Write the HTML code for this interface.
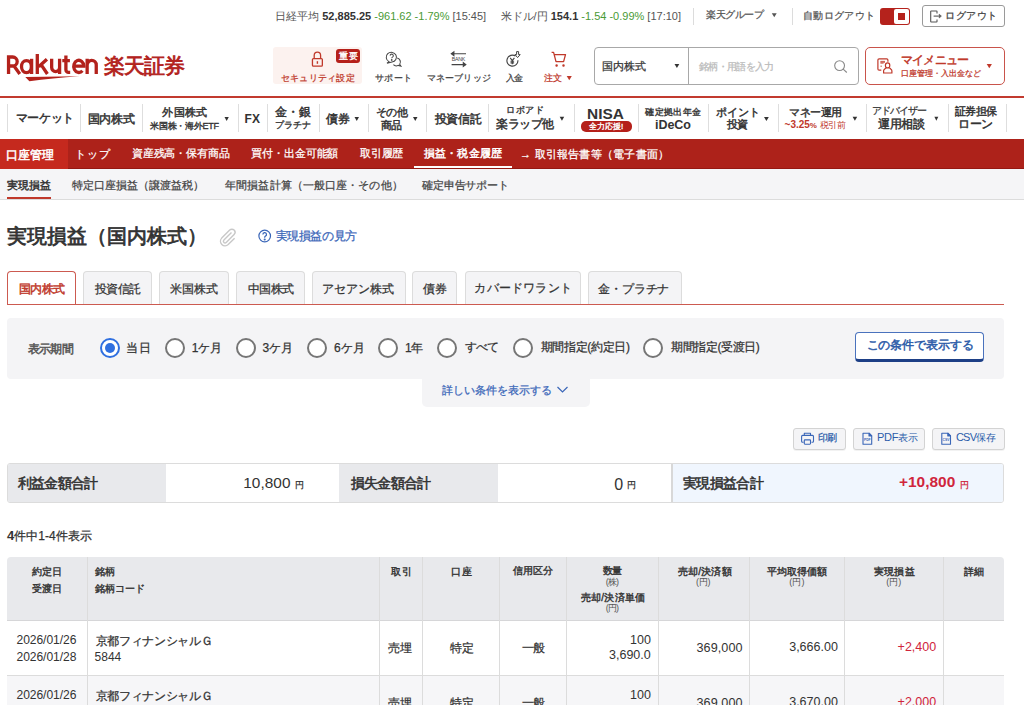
<!DOCTYPE html>
<html><head><meta charset="utf-8"><title>実現損益</title>
<style>
*{box-sizing:border-box;margin:0;padding:0}
html,body{width:1024px;height:705px;overflow:hidden;background:#fff;font-family:"Liberation Sans",sans-serif;color:#333}
.a{position:absolute;white-space:nowrap;line-height:1}
.t{position:absolute;white-space:nowrap;line-height:1;-webkit-text-stroke:0.25px currentColor}
.t b,.t[style*=bold],.nl{-webkit-text-stroke:0}
.sep{position:absolute;top:104px;width:1px;height:28px;background:#dedede}
.tab{position:absolute;top:271px;height:34px;background:#f4f4f6;border:1px solid #dcdcdc;border-bottom:none;border-radius:4px 4px 0 0}
.tab.act{background:#fff;border-color:#cc5a50}
.rad{position:absolute;top:338px;width:20px;height:20px;border:2px solid #767676;border-radius:50%;background:#fff}
.rad.on{border:2px solid #2f6fe0}
.rad.on::after{content:"";position:absolute;left:3px;top:3px;width:10px;height:10px;border-radius:50%;background:#2f6fe0}
.btn{position:absolute;top:428px;height:22px;background:#f4f4f6;border:1px solid #d3d3d3;border-radius:3px;box-shadow:0 1px 0 rgba(0,0,0,.05)}
.vl{position:absolute;top:557px;width:1px;height:148px;background:#dcdcdc}
</style></head><body>

<!-- top bar -->
<div class="a" style="left:693px;top:8px;width:1px;height:17px;background:#dcdcdc"></div>
<div class="a" style="left:792px;top:8px;width:1px;height:17px;background:#dcdcdc"></div>
<div class="a" style="left:880px;top:8px;width:30px;height:17px;background:#b5221c;border-radius:3px"></div>
<div class="a" style="left:894px;top:9px;width:15px;height:15px;background:#fff;border-radius:2px"></div>
<div class="a" style="left:898px;top:13px;width:7px;height:7px;background:#b5221c"></div>
<div class="a" style="left:922px;top:5px;width:83px;height:22px;border:1px solid #9a9a9a;border-radius:3px;background:#fff"></div>
<!-- header -->
<div class="a" style="left:273px;top:47px;width:89px;height:37px;background:#fcf2ef;border-radius:3px"></div>
<div class="a" style="left:336px;top:49px;width:24px;height:14px;background:#b5201a;border-radius:3px"></div>
<div class="a" style="left:594px;top:47px;width:265px;height:38px;border:1px solid #a8a8a8;border-radius:4px"></div>
<div class="a" style="left:688px;top:48px;width:1px;height:36px;background:#a8a8a8"></div>
<div class="a" style="left:865px;top:47px;width:140px;height:38px;border:1.5px solid #c9544b;border-radius:5px"></div>
<!-- nav -->
<div class="a" style="left:0;top:96px;width:1024px;height:2px;background:#c23a2f"></div>
<div class="sep" style="left:7px"></div><div class="sep" style="left:80px"></div><div class="sep" style="left:142px"></div><div class="sep" style="left:238px"></div><div class="sep" style="left:267px"></div><div class="sep" style="left:319px"></div><div class="sep" style="left:368px"></div><div class="sep" style="left:426px"></div><div class="sep" style="left:488px"></div><div class="sep" style="left:574px"></div><div class="sep" style="left:638px"></div><div class="sep" style="left:708px"></div><div class="sep" style="left:778px"></div><div class="sep" style="left:866px"></div><div class="sep" style="left:948px"></div><div class="sep" style="left:1006px"></div>
<div class="a" style="left:581px;top:121px;width:51px;height:10.5px;background:#b5201a;border-radius:5px"></div>
<!-- red bar -->
<div class="a" style="left:0;top:139px;width:1024px;height:30px;background:#ad221a;border-bottom:1px solid #951812"></div>
<div class="a" style="left:0;top:139px;width:68px;height:30px;background:#c5291e"></div>
<div class="a" style="left:414px;top:166px;width:98px;height:2px;background:#fff"></div>
<!-- sub nav -->
<div class="a" style="left:0;top:169px;width:1024px;height:31px;background:#f5f5f7;border-bottom:1px solid #dcdcdc"></div>
<div class="a" style="left:7px;top:197px;width:44px;height:2px;background:#c0392b"></div>
<!-- tabs -->
<div class="tab act" style="left:7px;width:69px"></div>
<div class="tab" style="left:83px;width:69px"></div>
<div class="tab" style="left:159px;width:70px"></div>
<div class="tab" style="left:236px;width:69px"></div>
<div class="tab" style="left:312px;width:94px"></div>
<div class="tab" style="left:412px;width:45px"></div>
<div class="tab" style="left:465px;width:116px"></div>
<div class="tab" style="left:588px;width:94px"></div>
<div class="a" style="left:7px;top:304px;width:997px;height:1px;background:#cc5a50"></div>
<!-- filter -->
<div class="a" style="left:7px;top:318px;width:997px;height:61px;background:#f4f4f6;border-radius:4px"></div>
<div class="rad on" style="left:100px"></div>
<div class="rad" style="left:165px"></div>
<div class="rad" style="left:236px"></div>
<div class="rad" style="left:307px"></div>
<div class="rad" style="left:378px"></div>
<div class="rad" style="left:437px"></div>
<div class="rad" style="left:513px"></div>
<div class="rad" style="left:643px"></div>
<div class="a" style="left:855px;top:332px;width:129px;height:30px;background:#fff;border:1px solid #4a72bd;border-bottom:3px solid #1d3f86;border-radius:4px"></div>
<div class="a" style="left:422px;top:378px;width:168px;height:29px;background:#f4f4f6;border-radius:0 0 5px 5px"></div>
<!-- buttons -->
<div class="btn" style="left:793px;width:53px"></div>
<div class="btn" style="left:853px;width:72px"></div>
<div class="btn" style="left:932px;width:73px"></div>
<!-- summary -->
<div class="a" style="left:7px;top:463px;width:997px;height:40px;border:1px solid #dcdcdc;border-radius:3px;overflow:hidden;background:#fff">
 <div class="a" style="left:0;top:0;width:158px;height:38px;background:#e8e9ec"></div>
 <div class="a" style="left:331px;top:0;width:159px;height:38px;background:#e8e9ec"></div>
 <div class="a" style="left:663px;top:0;width:334px;height:38px;background:#f0f6fe;border-left:2px solid #d8d8d8"></div>
</div>
<!-- table -->
<div class="a" style="left:7px;top:557px;width:997px;height:64px;background:#e8e9ec;border-radius:4px 4px 0 0;border-bottom:1px solid #d6d6d8"></div>
<div class="a" style="left:7px;top:621px;width:997px;height:55px;background:#fff;border-bottom:1px solid #dcdcdc"></div>
<div class="a" style="left:7px;top:676px;width:997px;height:40px;background:#f6f6f8"></div>
<div class="vl" style="left:87px"></div><div class="vl" style="left:379px"></div><div class="vl" style="left:422px"></div><div class="vl" style="left:499px"></div><div class="vl" style="left:566px"></div><div class="vl" style="left:658px"></div><div class="vl" style="left:749px"></div><div class="vl" style="left:844px"></div><div class="vl" style="left:943px"></div>

<div class="t nl" id="t_nk" style="left:275.20px;top:10.50px;font-size:11.00px;color:#555">日経平均 <b style="color:#333">52,885.25</b> <span style="color:#4a9a35">-961.62 -1.79%</span> [15:45]</div>
<div class="t nl" id="t_usd" style="left:500.60px;top:10.50px;font-size:11.00px;color:#555">米ドル/円 <b style="color:#333">154.1</b> <span style="color:#4a9a35">-1.54 -0.99%</span> [17:10]</div>
<div class="t" id="t_grp" style="left:705.90px;top:10.25px;font-size:10.00px;letter-spacing:-0.360px;color:#555">楽天グループ</div>
<div class="t" id="t_auto" style="left:803.20px;top:10.50px;font-size:10.00px;letter-spacing:0.300px;color:#555">自動ログアウト</div>
<div class="t" id="t_logout" style="left:945.40px;top:10.50px;font-size:10.00px;letter-spacing:0.400px;color:#444">ログアウト</div>
<div class="t" id="t_logo" style="left:103.50px;top:55.10px;font-size:21.00px;letter-spacing:-0.934px;color:#b3221c;font-weight:normal;-webkit-text-stroke:0.84px currentColor">楽天証券</div>
<div class="t" id="h_sec" style="left:280.80px;top:73.50px;font-size:9.00px;letter-spacing:0.257px;color:#c0392b">セキュリティ設定</div>
<div class="t" id="h_badge" style="left:338.50px;top:51.90px;font-size:9.00px;letter-spacing:1.000px;color:#fff;font-weight:normal;-webkit-text-stroke:0.36px currentColor">重要</div>
<div class="t" id="h_sup" style="left:375.00px;top:73.50px;font-size:9.00px;letter-spacing:0.333px;color:#444">サポート</div>
<div class="t" id="h_mb" style="left:426.80px;top:73.50px;font-size:9.00px;letter-spacing:0.167px;color:#444">マネーブリッジ</div>
<div class="t" id="h_nk" style="left:505.50px;top:73.50px;font-size:9.00px;letter-spacing:-1.000px;color:#444">入金</div>
<div class="t" id="h_ord" style="left:544.10px;top:74.00px;font-size:9.00px;letter-spacing:-0.400px;color:#c0392b">注文</div>
<div class="t" id="s_cat" style="left:602.40px;top:60.50px;font-size:11.00px;letter-spacing:-0.200px;color:#333">国内株式</div>
<div class="t" id="s_ph" style="left:699.00px;top:61.50px;font-size:10.00px;letter-spacing:-0.657px;color:#bbb">銘柄・用語を入力</div>
<div class="t" id="m_t" style="left:901.00px;top:53.50px;font-size:12.00px;letter-spacing:-0.800px;color:#c0392b;font-weight:normal;-webkit-text-stroke:0.48px currentColor">マイメニュー</div>
<div class="t" id="m_s" style="left:901.00px;top:70.30px;font-size:8.00px;color:#c0392b">口座管理・入出金など</div>
<div class="t" id="n1" style="left:15.60px;top:112.30px;font-size:12.00px;letter-spacing:-0.350px;color:#333;font-weight:normal;-webkit-text-stroke:0.48px currentColor">マーケット</div>
<div class="t" id="n2" style="left:87.70px;top:112.80px;font-size:12.00px;letter-spacing:-0.266px;color:#333;font-weight:normal;-webkit-text-stroke:0.48px currentColor">国内株式</div>
<div class="t" id="n3a" style="left:162.10px;top:107.00px;font-size:11.00px;letter-spacing:0.467px;color:#333;font-weight:normal;-webkit-text-stroke:0.44px currentColor">外国株式</div>
<div class="t" id="n3b" style="left:150.00px;top:122.00px;font-size:9.00px;letter-spacing:-0.250px;color:#333;font-weight:normal;-webkit-text-stroke:0.36px currentColor">米国株・海外ETF</div>
<div class="t nl" id="n4" style="left:244.60px;top:113.20px;font-size:12.00px;color:#333;font-weight:bold">FX</div>
<div class="t" id="n5a" style="left:275.20px;top:106.30px;font-size:12.00px;letter-spacing:-0.300px;color:#333;font-weight:normal;-webkit-text-stroke:0.48px currentColor">金・銀</div>
<div class="t" id="n5b" style="left:275.20px;top:120.90px;font-size:9.00px;letter-spacing:-0.134px;color:#333;font-weight:normal;-webkit-text-stroke:0.36px currentColor">プラチナ</div>
<div class="t" id="n6" style="left:326.30px;top:113.00px;font-size:12.00px;color:#333;font-weight:normal;-webkit-text-stroke:0.48px currentColor">債券</div>
<div class="t" id="n7a" style="left:375.80px;top:106.50px;font-size:11.00px;letter-spacing:-0.300px;color:#333;font-weight:normal;-webkit-text-stroke:0.44px currentColor">その他</div>
<div class="t" id="n7b" style="left:380.70px;top:120.10px;font-size:11.00px;letter-spacing:-0.200px;color:#333;font-weight:normal;-webkit-text-stroke:0.44px currentColor">商品</div>
<div class="t" id="n8" style="left:434.60px;top:113.00px;font-size:12.00px;letter-spacing:-0.200px;color:#333;font-weight:normal;-webkit-text-stroke:0.48px currentColor">投資信託</div>
<div class="t" id="n9a" style="left:506.40px;top:106.30px;font-size:9.00px;letter-spacing:0.400px;color:#333;font-weight:normal;-webkit-text-stroke:0.36px currentColor">ロボアド</div>
<div class="t" id="n9b" style="left:496.00px;top:118.20px;font-size:12.00px;letter-spacing:-0.450px;color:#333;font-weight:normal;-webkit-text-stroke:0.48px currentColor">楽ラップ他</div>
<div class="t nl" id="n10a" style="left:587.00px;top:105.80px;font-size:15.43px;color:#333;font-weight:bold">NISA</div>
<div class="t" id="n10b" style="left:589.00px;top:122.50px;font-size:8.00px;color:#fff;font-weight:normal;-webkit-text-stroke:0.32px currentColor">全力応援!</div>
<div class="t" id="n11a" style="left:645.20px;top:107.60px;font-size:9.00px;letter-spacing:0.360px;color:#333;font-weight:normal;-webkit-text-stroke:0.36px currentColor">確定拠出年金</div>
<div class="t nl" id="n11b" style="left:655.10px;top:119.05px;font-size:12.50px;letter-spacing:-0.100px;color:#333;font-weight:bold">iDeCo</div>
<div class="t" id="n12a" style="left:715.80px;top:106.50px;font-size:11.00px;color:#333;font-weight:normal;-webkit-text-stroke:0.44px currentColor">ポイント</div>
<div class="t" id="n12b" style="left:726.70px;top:119.05px;font-size:11.00px;letter-spacing:-0.200px;color:#333;font-weight:normal;-webkit-text-stroke:0.44px currentColor">投資</div>
<div class="t" id="n13a" style="left:789.00px;top:106.70px;font-size:11.00px;letter-spacing:-0.400px;color:#333;font-weight:normal;-webkit-text-stroke:0.44px currentColor">マネー運用</div>
<div class="t nl" id="n13b" style="left:784.60px;top:120.20px;font-size:10.00px;letter-spacing:-0.044px;color:#c0392b;font-weight:bold">~3.25<span style="font-size:8px">%</span> <span style="font-size:9px;font-weight:normal">税引前</span></div>
<div class="t" id="n14a" style="left:871.90px;top:105.90px;font-size:10.00px;letter-spacing:-0.920px;color:#333">アドバイザー</div>
<div class="t" id="n14b" style="left:878.10px;top:118.00px;font-size:12.00px;letter-spacing:-0.333px;color:#333;font-weight:normal;-webkit-text-stroke:0.48px currentColor">運用相談</div>
<div class="t" id="n15a" style="left:954.90px;top:105.90px;font-size:11.00px;letter-spacing:-0.533px;color:#333;font-weight:normal;-webkit-text-stroke:0.44px currentColor">証券担保</div>
<div class="t" id="n15b" style="left:958.40px;top:117.50px;font-size:12.00px;letter-spacing:-0.800px;color:#333;font-weight:normal;-webkit-text-stroke:0.48px currentColor">ローン</div>
<div class="t" id="r1" style="left:6.30px;top:148.80px;font-size:12.00px;color:#fff;font-weight:normal;-webkit-text-stroke:0.48px currentColor">口座管理</div>
<div class="t" id="r2" style="left:75.10px;top:148.80px;font-size:11.00px;letter-spacing:0.800px;color:#fff">トップ</div>
<div class="t" id="r3" style="left:132.00px;top:148.40px;font-size:11.00px;letter-spacing:-0.175px;color:#fff">資産残高・保有商品</div>
<div class="t" id="r4" style="left:251.20px;top:148.20px;font-size:11.00px;letter-spacing:-0.114px;color:#fff">買付・出金可能額</div>
<div class="t" id="r5" style="left:360.20px;top:148.20px;font-size:11.00px;letter-spacing:-0.266px;color:#fff">取引履歴</div>
<div class="t" id="r6" style="left:424.00px;top:148.20px;font-size:11.00px;letter-spacing:0.166px;color:#fff;font-weight:normal;-webkit-text-stroke:0.44px currentColor">損益・税金履歴</div>
<div class="t" id="r7" style="left:520.00px;top:148.70px;font-size:11.00px;letter-spacing:0.231px;color:#fff">→ 取引報告書等（電子書面）</div>
<div class="t" id="sn1" style="left:7.30px;top:179.50px;font-size:11.00px;letter-spacing:-0.200px;color:#333;font-weight:normal;-webkit-text-stroke:0.44px currentColor">実現損益</div>
<div class="t" id="sn2" style="left:71.70px;top:179.50px;font-size:11.00px;letter-spacing:0.037px;color:#444">特定口座損益（譲渡益税）</div>
<div class="t" id="sn3" style="left:225.10px;top:179.50px;font-size:11.00px;letter-spacing:0.107px;color:#444">年間損益計算（一般口座・その他）</div>
<div class="t" id="sn4" style="left:422.00px;top:179.50px;font-size:11.00px;letter-spacing:-0.143px;color:#444">確定申告サポート</div>
<div class="t" id="ti" style="left:7.40px;top:226.10px;font-size:20.00px;color:#333;font-weight:normal;-webkit-text-stroke:0.80px currentColor">実現損益（国内株式）</div>
<div class="t" id="ti_l" style="left:275.50px;top:229.50px;font-size:12.00px;letter-spacing:-0.366px;color:#3a66b8">実現損益の見方</div>
<div class="t" id="tb1" style="left:18.60px;top:282.60px;font-size:12.00px;letter-spacing:-0.400px;color:#c0392b;font-weight:normal;-webkit-text-stroke:0.48px currentColor">国内株式</div>
<div class="t" id="tb2" style="left:94.50px;top:282.60px;font-size:12.00px;letter-spacing:-0.400px;color:#333">投資信託</div>
<div class="t" id="tb3" style="left:170.30px;top:282.60px;font-size:12.00px;letter-spacing:-0.066px;color:#333">米国株式</div>
<div class="t" id="tb4" style="left:247.80px;top:282.60px;font-size:12.00px;letter-spacing:-0.533px;color:#333">中国株式</div>
<div class="t" id="tb5" style="left:322.20px;top:282.60px;font-size:12.00px;letter-spacing:0.040px;color:#333">アセアン株式</div>
<div class="t" id="tb6" style="left:423.00px;top:282.60px;font-size:12.00px;color:#333">債券</div>
<div class="t" id="tb7" style="left:474.40px;top:282.10px;font-size:12.00px;letter-spacing:0.200px;color:#333">カバードワラント</div>
<div class="t" id="tb8" style="left:598.40px;top:282.60px;font-size:12.00px;letter-spacing:-0.200px;color:#333">金・プラチナ</div>
<div class="t" id="f_l" style="left:27.50px;top:343.00px;font-size:12.00px;letter-spacing:-0.533px;color:#555;font-weight:normal;-webkit-text-stroke:0.48px currentColor">表示期間</div>
<div class="t" id="f1" style="left:126.20px;top:341.90px;font-size:12.00px;letter-spacing:1.200px;color:#333">当日</div>
<div class="t" id="f2" style="left:191.70px;top:341.90px;font-size:12.00px;color:#333">1ケ月</div>
<div class="t" id="f3" style="left:262.40px;top:341.90px;font-size:12.00px;color:#333">3ケ月</div>
<div class="t" id="f4" style="left:334.00px;top:341.90px;font-size:12.00px;letter-spacing:0.200px;color:#333">6ケ月</div>
<div class="t" id="f5" style="left:405.00px;top:341.90px;font-size:12.00px;letter-spacing:-0.600px;color:#333">1年</div>
<div class="t" id="f6" style="left:465.00px;top:341.40px;font-size:12.00px;letter-spacing:-1.000px;color:#333">すべて</div>
<div class="t" id="f7" style="left:540.50px;top:341.40px;font-size:12.00px;letter-spacing:-0.324px;color:#333">期間指定(約定日)</div>
<div class="t" id="f8" style="left:671.00px;top:341.40px;font-size:12.00px;letter-spacing:-0.400px;color:#333">期間指定(受渡日)</div>
<div class="t" id="f_btn" style="left:866.60px;top:338.90px;font-size:12.00px;letter-spacing:-0.101px;color:#2b5aa8;font-weight:normal;-webkit-text-stroke:0.48px currentColor">この条件で表示する</div>
<div class="t" id="f_more" style="left:442.20px;top:384.60px;font-size:11.00px;letter-spacing:-0.023px;color:#3a66b8">詳しい条件を表示する</div>
<div class="t" id="b1" style="left:818.00px;top:432.90px;font-size:10.00px;letter-spacing:-0.600px;color:#2b5caa">印刷</div>
<div class="t nl" id="b2" style="left:877.10px;top:432.40px;font-size:10.00px;letter-spacing:-0.350px;color:#2b5caa"><span style="font-size:11px">PDF</span>表示</div>
<div class="t nl" id="b3" style="left:955.90px;top:432.40px;font-size:10.00px;letter-spacing:-0.750px;color:#2b5caa"><span style="font-size:11px">CSV</span>保存</div>
<div class="t" id="sm1" style="left:17.90px;top:475.50px;font-size:14.00px;letter-spacing:-0.720px;color:#333;font-weight:normal;-webkit-text-stroke:0.56px currentColor">利益金額合計</div>
<div class="t nl" id="sm1v" style="left:243.20px;top:474.90px;font-size:15.40px;letter-spacing:0.040px;color:#333">10,800</div>
<div class="t" id="sm1y" style="left:295.10px;top:481.00px;font-size:9.00px;color:#333">円</div>
<div class="t" id="sm2" style="left:350.60px;top:475.50px;font-size:14.00px;letter-spacing:-0.680px;color:#333;font-weight:normal;-webkit-text-stroke:0.56px currentColor">損失金額合計</div>
<div class="t nl" id="sm2v" style="left:614.20px;top:476.90px;font-size:16.00px;color:#333">0</div>
<div class="t" id="sm2y" style="left:626.50px;top:481.00px;font-size:9.00px;color:#333">円</div>
<div class="t" id="sm3" style="left:682.80px;top:475.50px;font-size:14.00px;letter-spacing:-0.640px;color:#333;font-weight:normal;-webkit-text-stroke:0.56px currentColor">実現損益合計</div>
<div class="t nl" id="sm3v" style="left:899.00px;top:474.40px;font-size:15.45px;color:#d0253c;font-weight:bold">+10,800</div>
<div class="t" id="sm3y" style="left:959.60px;top:481.00px;font-size:9.00px;color:#d0253c">円</div>
<div class="t" id="cnt" style="left:7.00px;top:528.60px;font-size:12.00px;color:#333"><b style="font-size:13px">4</b>件中1-4件表示</div>
<div class="t" id="h1a" style="left:31.70px;top:566.60px;font-size:10.00px;letter-spacing:0.100px;color:#333;font-weight:normal;-webkit-text-stroke:0.40px currentColor">約定日</div>
<div class="t" id="h1b" style="left:31.70px;top:583.60px;font-size:10.00px;letter-spacing:0.100px;color:#333;font-weight:normal;-webkit-text-stroke:0.40px currentColor">受渡日</div>
<div class="t" id="h2a" style="left:95.00px;top:566.60px;font-size:10.00px;letter-spacing:-0.400px;color:#333;font-weight:normal;-webkit-text-stroke:0.40px currentColor">銘柄</div>
<div class="t" id="h2b" style="left:95.00px;top:583.60px;font-size:10.00px;color:#333;font-weight:normal;-webkit-text-stroke:0.40px currentColor">銘柄コード</div>
<div class="t" id="h3" style="left:391.00px;top:566.60px;font-size:10.00px;letter-spacing:1.000px;color:#333;font-weight:normal;-webkit-text-stroke:0.40px currentColor">取引</div>
<div class="t" id="h4" style="left:450.80px;top:566.60px;font-size:10.00px;letter-spacing:0.800px;color:#333;font-weight:normal;-webkit-text-stroke:0.40px currentColor">口座</div>
<div class="t" id="h5" style="left:513.40px;top:566.10px;font-size:10.00px;letter-spacing:-0.200px;color:#333;font-weight:normal;-webkit-text-stroke:0.40px currentColor">信用区分</div>
<div class="t" id="h6a" style="left:603.00px;top:566.10px;font-size:10.00px;letter-spacing:-1.000px;color:#333;font-weight:normal;-webkit-text-stroke:0.40px currentColor">数量</div>
<div class="t nl" id="h6b" style="left:605.70px;top:577.70px;font-size:9.00px;letter-spacing:-0.800px;color:#555">(株)</div>
<div class="t" id="h6c" style="left:580.50px;top:592.80px;font-size:10.00px;letter-spacing:0.333px;color:#333;font-weight:normal;-webkit-text-stroke:0.40px currentColor">売却/決済単価</div>
<div class="t nl" id="h6d" style="left:605.70px;top:603.90px;font-size:9.00px;letter-spacing:-0.800px;color:#555">(円)</div>
<div class="t" id="h7a" style="left:677.60px;top:566.60px;font-size:10.00px;letter-spacing:0.280px;color:#333;font-weight:normal;-webkit-text-stroke:0.40px currentColor">売却/決済額</div>
<div class="t nl" id="h7b" style="left:696.10px;top:577.70px;font-size:9.00px;letter-spacing:-0.300px;color:#555">(円)</div>
<div class="t" id="h8a" style="left:766.90px;top:566.60px;font-size:10.00px;letter-spacing:0.080px;color:#333;font-weight:normal;-webkit-text-stroke:0.40px currentColor">平均取得価額</div>
<div class="t nl" id="h8b" style="left:789.20px;top:578.30px;font-size:9.00px;letter-spacing:0.200px;color:#555">(円)</div>
<div class="t" id="h9a" style="left:874.20px;top:566.60px;font-size:10.00px;letter-spacing:0.134px;color:#333;font-weight:normal;-webkit-text-stroke:0.40px currentColor">実現損益</div>
<div class="t nl" id="h9b" style="left:886.30px;top:578.30px;font-size:9.00px;color:#555">(円)</div>
<div class="t" id="h10" style="left:964.00px;top:566.60px;font-size:10.00px;letter-spacing:0.200px;color:#333;font-weight:normal;-webkit-text-stroke:0.40px currentColor">詳細</div>
<div class="t nl" id="d0dt1" style="left:16.50px;top:633.60px;font-size:12.08px;letter-spacing:-0.066px;color:#333">2026/01/26</div>
<div class="t nl" id="d0dt2" style="left:16.50px;top:651.40px;font-size:12.08px;letter-spacing:-0.066px;color:#333">2026/01/28</div>
<div class="t" id="d0nm" style="left:95.60px;top:634.60px;font-size:12.00px;letter-spacing:-0.311px;color:#333">京都フィナンシャルＧ</div>
<div class="t nl" id="d0cd" style="left:94.60px;top:650.50px;font-size:12.00px;color:#333">5844</div>
<div class="t" id="d0tr" style="left:388.40px;top:642.20px;font-size:12.00px;letter-spacing:-0.200px;color:#333">売埋</div>
<div class="t" id="d0ac" style="left:449.80px;top:642.20px;font-size:12.00px;letter-spacing:-0.200px;color:#333">特定</div>
<div class="t" id="d0cr" style="left:521.50px;top:642.20px;font-size:12.00px;letter-spacing:-1.000px;color:#333">一般</div>
<div class="t nl" id="d0q" style="left:630.00px;top:634.30px;font-size:12.50px;color:#333">100</div>
<div class="t nl" id="d0up" style="left:609.00px;top:649.40px;font-size:12.50px;color:#333">3,690.0</div>
<div class="t nl" id="d0amt" style="left:696.50px;top:641.90px;font-size:12.61px;letter-spacing:0.067px;color:#333">369,000</div>
<div class="t nl" id="d0avg" style="left:789.20px;top:641.40px;font-size:12.50px;color:#333">3,666.00</div>
<div class="t nl" id="d0pl" style="left:897.60px;top:641.40px;font-size:12.50px;color:#d0253c">+2,400</div>
<div class="t nl" id="d1dt1" style="left:16.50px;top:688.60px;font-size:12.08px;letter-spacing:-0.066px;color:#333">2026/01/26</div>
<div class="t nl" id="d1dt2" style="left:16.50px;top:706.40px;font-size:12.08px;letter-spacing:-0.066px;color:#333">2026/01/28</div>
<div class="t" id="d1nm" style="left:95.60px;top:689.60px;font-size:12.00px;letter-spacing:-0.311px;color:#333">京都フィナンシャルＧ</div>
<div class="t nl" id="d1cd" style="left:94.60px;top:705.50px;font-size:12.00px;color:#333">5844</div>
<div class="t" id="d1tr" style="left:388.40px;top:697.20px;font-size:12.00px;letter-spacing:-0.200px;color:#333">売埋</div>
<div class="t" id="d1ac" style="left:449.80px;top:697.20px;font-size:12.00px;letter-spacing:-0.200px;color:#333">特定</div>
<div class="t" id="d1cr" style="left:521.50px;top:697.20px;font-size:12.00px;letter-spacing:-1.000px;color:#333">一般</div>
<div class="t nl" id="d1q" style="left:630.00px;top:689.30px;font-size:12.50px;color:#333">100</div>
<div class="t nl" id="d1up" style="left:609.00px;top:704.40px;font-size:12.50px;color:#333">3,690.0</div>
<div class="t nl" id="d1amt" style="left:696.50px;top:696.90px;font-size:12.61px;letter-spacing:0.067px;color:#333">369,000</div>
<div class="t nl" id="d1avg" style="left:789.20px;top:696.40px;font-size:12.50px;color:#333">3,670.00</div>
<div class="t nl" id="d1pl" style="left:897.60px;top:696.40px;font-size:12.50px;color:#d0253c">+2,000</div>

<svg style="position:absolute;left:0;top:0" width="1024" height="705" viewBox="0 0 1024 705" fill="none">
<g stroke="#555" stroke-width="1.1" stroke-linejoin="round"><path d="M937 13.6v-2.1a.5.5 0 0 0-.5-.5h-5.2a.6.6 0 0 0-.6.6v9.8a.6.6 0 0 0 .6.6h5.2a.5.5 0 0 0 .5-.5v-2.1"/><path d="M933.6 16.1h5.2"/><path d="M939.2 14.2l2.2 1.9-2.2 1.9z" fill="#555" stroke-width=".6"/></g>
<g fill="none" stroke="#b3221c" stroke-width="3.3">
<path d="M8.55 74V57h4.15a4.5 4.5 0 0 1 0 9H8.55M14.2 66.3l5.6 7.7"/>
<ellipse cx="26.45" cy="66.6" rx="4.95" ry="6.05"/><path d="M31.6 58.8V74"/>
<path d="M37.3 54.1V74M46.9 59.2l-8.2 7.6M41.6 65.3l5.8 8.7"/>
<path d="M51.65 58.8v8.8a4 4 0 0 0 8 0M59.6 58.8V74"/>
<path d="M65.9 55.6v14.2a2.6 2.6 0 0 0 2.6 2.6h1.7M62.3 60.7h7.6"/>
<path d="M72.6 66.1h11.3a5.1 6.1 0 1 0-1.5 4.6"/>
<path d="M87.15 74V58.8M87.15 65a4.55 4.55 0 0 1 9.1 0V74"/>
<path d="M25.3 77.1L79.5 76.3Q52 78.2 29.4 81.2Z" fill="#b3221c" stroke="none"/>
</g>
<g stroke="#c0392b" stroke-width="1.3"><path d="M314.2 58.5V55.4a3.2 3.3 0 0 1 6.4 0v3.1"/><rect x="312.45" y="58.6" width="9.9" height="7.6" rx="1"/><path d="M317.4 61.2v2.6" stroke-width="1.4"/></g>
<g stroke="#444" stroke-width="1.05"><path d="M389 61.6A5.1 4.9 0 1 1 392 62.1L387 63.2Z" fill="#fff"/><path d="M397.2 58a4.1 4.1 0 0 1 2.5 6.3l1.2 1.9-2.7-.8a4.1 4.1 0 0 1-4.8-.7"/><path d="M390.1 55.6a1.6 1.6 0 1 1 2.4 1.5c-.6.3-.8.6-.8 1.2"/><circle cx="391.7" cy="59.9" r=".35" fill="#444"/></g>
<g stroke="#444" stroke-width="1.1"><path d="M452 53.7h14M451.6 64.6h14"/><path d="M451.3 53.7l2.6-1.9v3.8z M465.9 64.6l-2.6-1.9v3.8z" fill="#444"/></g>
<text x="458.4" y="61.3" font-size="5.2" font-family="Liberation Sans" fill="#444" text-anchor="middle" letter-spacing="-0.2">BANK</text>
<g stroke="#444" stroke-width="1.15"><path d="M515.5 56.1A5.5 5.5 0 1 0 517.9 60.2"/><path d="M510.2 57.9l2.1 2.6 2.1-2.6M512.3 60.5v3.8M510.5 61.2h3.6M510.5 62.8h3.6"/><path d="M516.6 51.6h2v3h1.6l-2.6 3-2.6-3h1.6z" stroke-width="1"/></g>
<g stroke="#c0392b" stroke-width="1.3" stroke-linejoin="round"><path d="M551.6 52.3h2l2.4 9.4h7.6l1.9-7H554.4"/><circle cx="556.6" cy="65.6" r=".6" fill="#c0392b"/><circle cx="563.5" cy="65.6" r=".6" fill="#c0392b"/></g>
<g stroke="#888" stroke-width="1.1"><circle cx="839.6" cy="65.6" r="4.9"/><path d="M843.2 69.2l3.6 3.3"/></g>
<g stroke="#c0392b" stroke-width="1.2"><path d="M881.3 70.1h-2.2a1.2 1.2 0 0 1-1.2-1.2v-8.8a1.2 1.2 0 0 1 1.2-1.2h7.6a1.2 1.2 0 0 1 1.2 1.2v1.7"/><path d="M880.4 61.4h4.6M880.4 62.3h4.6M880.4 63.2h3.2M880.4 66.2h1.6" stroke-width=".8"/><ellipse cx="887.6" cy="65.4" rx="2.2" ry="2.5"/><path d="M886.1 67.8l-1.6 1.4a2.2 2.2 0 0 0-.9 1.8v2h8.3v-2a2.2 2.2 0 0 0-.9-1.8l-1.6-1.4"/></g>
<!-- triangles -->
<path d="M771.8 13.3H776.7L774.25 17.2Z" fill="#555"/>
<path d="M566.7 75.9H571.8L569.25 80.2Z" fill="#c0392b"/>
<path d="M674.5 64.0H679.3L676.90 68.1Z" fill="#333"/>
<path d="M986.7 63.9H991.9L989.30 68.3Z" fill="#c0392b"/>
<path d="M224.5 117.0H228.8L226.65 121.0Z" fill="#333"/>
<path d="M354.5 117.0H359.0L356.75 121.0Z" fill="#333"/>
<path d="M413.0 117.0H417.5L415.25 121.0Z" fill="#333"/>
<path d="M559.7 116.7H564.2L561.95 120.8Z" fill="#333"/>
<path d="M764.0 117.0H768.8L766.40 121.0Z" fill="#333"/>
<path d="M852.6 116.8H857.2L854.90 120.7Z" fill="#333"/>
<path d="M934.4 116.8H938.3L936.35 120.7Z" fill="#333"/>
<!-- paperclip -->
<g stroke="#c8c8c8" stroke-width="1.4"><path d="M231.5 232.5l-7.6 7.6a1.6 1.6 0 0 0 2.3 2.3l7.9-7.9a3.1 3.1 0 0 0-4.4-4.4l-8 8a4.6 4.6 0 0 0 6.5 6.5l6.4-6.4"/></g>
<!-- help -->
<g stroke="#3a66b8" stroke-width="1.2"><circle cx="264.7" cy="236" r="5.8"/><path d="M262.9 234.5a1.8 1.8 0 1 1 2.6 1.6c-.5.3-.8.6-.8 1.2v.4"/><circle cx="264.7" cy="239.5" r=".45" fill="#3a66b8"/></g>
<!-- chevron -->
<path d="M557.5 387l5 5 5-5" stroke="#3a66b8" stroke-width="1.2"/>
<!-- print -->
<g stroke="#3a66b8" stroke-width="1.1" stroke-linejoin="round"><path d="M804.3 435.4v-2.2h6.2v2.2"/><path d="M803.6 442.3h-1a1 1 0 0 1-1-1v-4.9a1 1 0 0 1 1-1h9.9a1 1 0 0 1 1 1v4.9a1 1 0 0 1-1 1h-1"/><rect x="804.3" y="439.9" width="6.2" height="4.3" rx=".6"/></g>
<!-- pdf -->
<g stroke="#3a66b8" stroke-width="1.1" stroke-linejoin="round"><path d="M863 433.2h6l2.7 2.7v8.4h-8.7z"/><path d="M869 433.2l2.7 2.7h-2.7z" fill="#3a66b8"/></g>
<text x="867.3" y="440.9" font-size="3.4" font-family="Liberation Sans" font-weight="bold" fill="#3a66b8" text-anchor="middle">PDF</text>
<g stroke="#3a66b8" stroke-width="1.1" stroke-linejoin="round"><path d="M941.8 433.2h6l2.7 2.7v8.4h-8.7z"/><path d="M947.8 433.2l2.7 2.7h-2.7z" fill="#3a66b8"/></g>
<text x="946.1" y="440.9" font-size="3.4" font-family="Liberation Sans" font-weight="bold" fill="#3a66b8" text-anchor="middle">CSV</text>
</svg>

</body></html>
